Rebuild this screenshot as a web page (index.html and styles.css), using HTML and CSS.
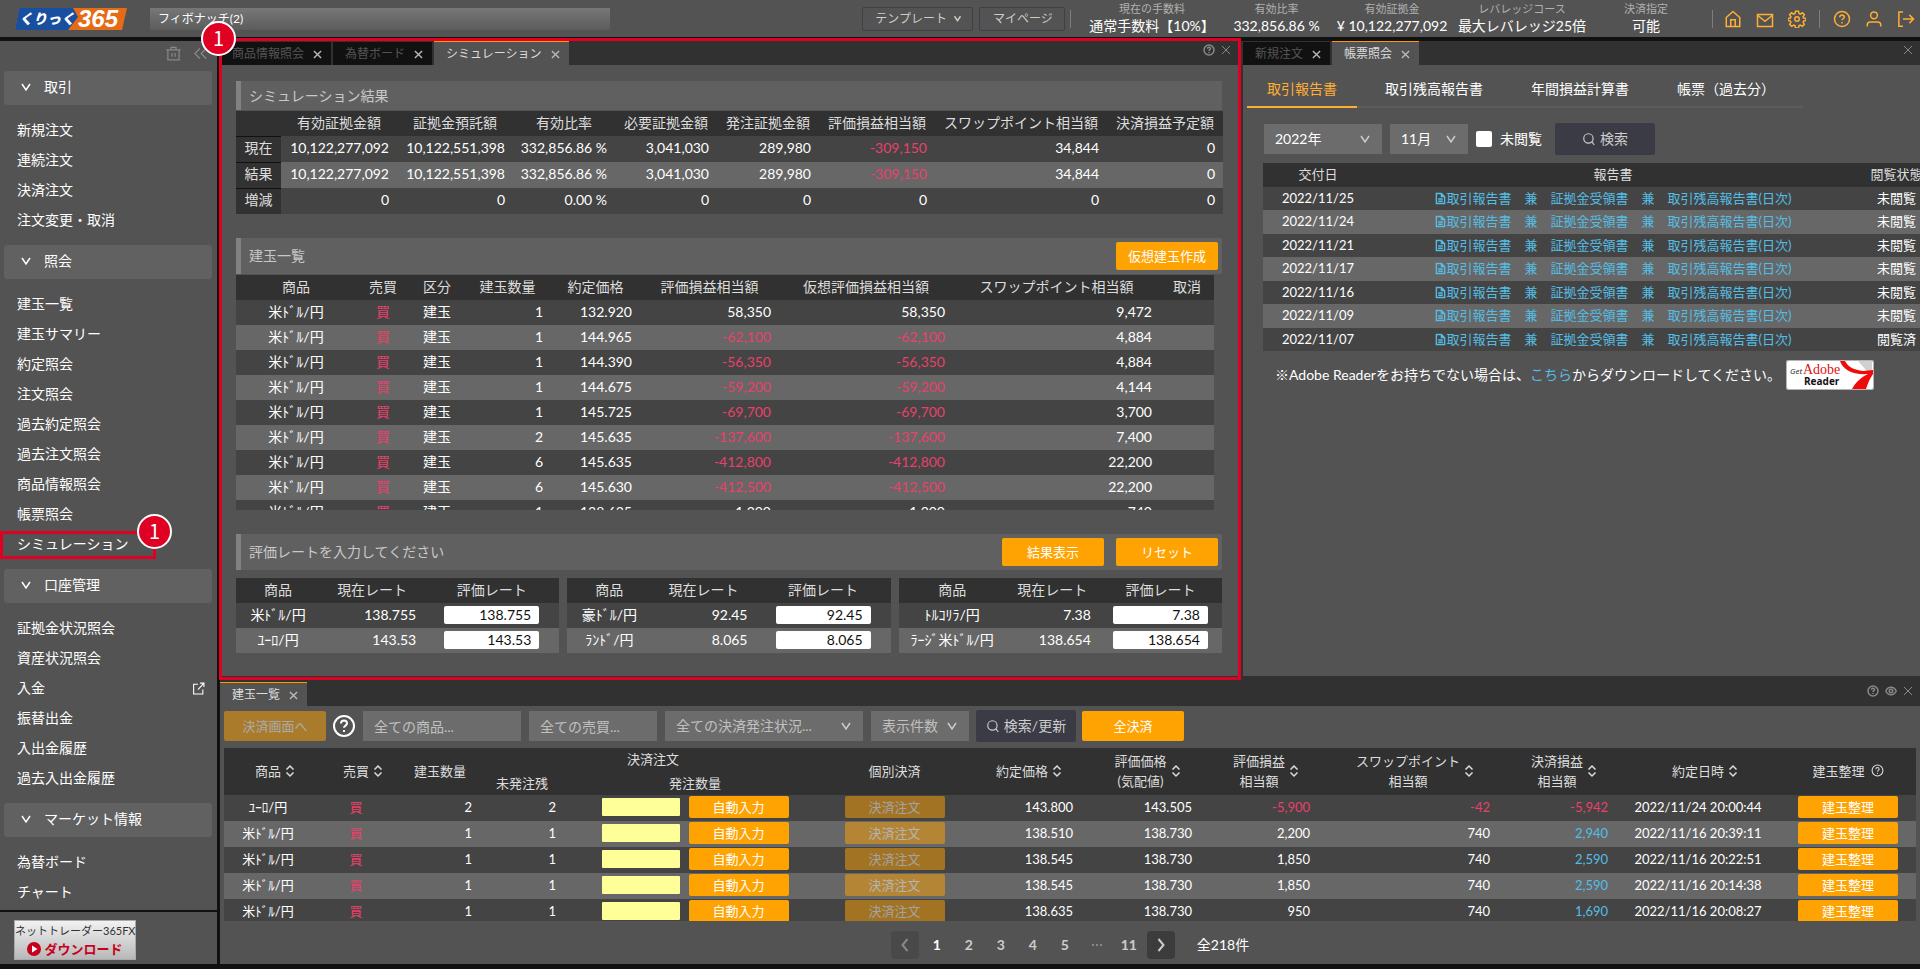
FILE: index.html
```html
<!DOCTYPE html>
<html lang="ja">
<head>
<meta charset="utf-8">
<title>くりっく365 シミュレーション</title>
<link rel="stylesheet" href="styles.css">
</head>
<body>
<svg class="sprite" aria-hidden="true">
  <symbol id="i-x" viewBox="0 0 10 10"><path d="M1 1l8 8M9 1l-8 8"/></symbol>
  <symbol id="i-down" viewBox="0 0 12 12"><path d="M2 3l4 6 4-6"/></symbol>
  <symbol id="i-sort" viewBox="0 0 10 14"><path d="M1.500 5.500L5 2l3.500 3.500M1.500 8.500L5 12l3.500-3.500"/></symbol>
  <symbol id="i-help" viewBox="0 0 24 24"><circle cx="12" cy="12" r="10"/><path d="M9 9.500a3 3 0 0 1 6 0c0 2-3 2.300-3 4.300M12 16v2"/></symbol>
  <symbol id="i-search" viewBox="0 0 24 24"><circle cx="11" cy="11" r="8"/><path d="M16.500 16.500L21 22"/></symbol>
  <symbol id="i-file" viewBox="0 0 12 14"><path d="M1.500 1.500h5.500l3.500 3.500v7.500h-9zM7 1.500V5h3.500M3.500 7.500h5M3.500 10h5"/></symbol>
  <symbol id="i-eye" viewBox="0 0 24 24"><path d="M1.500 12C4 7 8 4.500 12 4.500S20 7 22.500 12C20 17 16 19.500 12 19.500S4 17 1.500 12z"/><circle cx="12" cy="12" r="3.500"/></symbol>
</svg>

<header class="topbar">
  <svg class="logo" width="112" height="22" viewBox="0 0 112 22" role="img" aria-label="くりっく365">
    <path d="M4 0H112L107 22H0z" fill="#e66b17"/>
    <path d="M4 0H58L63 9L53 22H0z" fill="#184f9e"/>
    <text class="logo-kana" x="4" y="16">くりっく</text>
    <text class="logo-num" x="63" y="19">365</text>
  </svg>
  <div class="ticker">フィボナッチ(2)</div>
  <div class="top-actions">
    <button class="ghost" type="button">テンプレート<svg class="ic ic8"><use href="#i-down"/></svg></button>
    <button class="ghost" type="button">マイページ</button>
  </div>
  <span class="divider"></span>
  <dl class="stats">
    <div><dt>現在の手数料</dt><dd>通常手数料【10%】</dd></div>
    <div><dt>有効比率</dt><dd>332,856.86 %</dd></div>
    <div><dt>有効証拠金</dt><dd>¥ 10,122,277,092</dd></div>
    <div><dt>レバレッジコース</dt><dd>最大レバレッジ25倍</dd></div>
    <div><dt>決済指定</dt><dd>可能</dd></div>
  </dl>
  <span class="divider"></span>
  <div class="icons">
    <button type="button" aria-label="ホーム"><svg viewBox="0 0 24 24"><path d="M3 10l9-8 9 8v12H3zM9 22v-9h6v9"/></svg></button>
    <button type="button" aria-label="メール"><svg viewBox="0 0 24 24"><path d="M2 6h20v16H2zM2 7l10 8 10-8"/></svg></button>
    <button type="button" aria-label="設定"><svg viewBox="0 0 24 24"><circle cx="12" cy="12" r="3"/><path d="M10 1.500h4l.7 3.200 1.700.7 2.800-1.700 2.600 2.600-1.700 2.800.7 1.700 3.200.7v2.500l-3.200.7-.7 1.700 1.700 2.800-2.600 2.600-2.800-1.700-1.700.7-.7 3.200h-4l-.7-3.200-1.700-.7-2.800 1.700-2.600-2.600 1.700-2.800-.7-1.700-3.200-.7v-2.500l3.200-.7.7-1.700-1.700-2.800 2.600-2.600 2.800 1.700 1.700-.7z"/></svg></button>
    <span class="divider"></span>
    <button type="button" aria-label="ヘルプ"><svg><use href="#i-help"/></svg></button>
    <button type="button" aria-label="ユーザー"><svg viewBox="0 0 24 24"><circle cx="12" cy="7" r="4.500"/><path d="M3 22v-2a4 4 0 0 1 4-4h10a4 4 0 0 1 4 4v2"/></svg></button>
    <button type="button" aria-label="ログアウト"><svg viewBox="0 0 24 24"><path d="M8 2.500H2.500v19H8M8 12h14M16.500 6.500L22 12l-5.500 5.500"/></svg></button>
  </div>
</header>

<div class="layout">
  <nav class="sidebar">
    <div class="side-tools">
      <button type="button" aria-label="削除"><svg viewBox="0 0 24 24"><path d="M3 6h18v16H3zM0.500 6h23M8 6V2h8v4M9.500 11v6M14.500 11v6"/></svg></button>
      <button type="button" aria-label="折りたたむ"><svg viewBox="0 0 24 24"><path d="M11 4l-8 8 8 8M21 4l-8 8 8 8"/></svg></button>
    </div>
    <section>
      <button class="group" type="button"><svg class="ic ic12"><use href="#i-down"/></svg>取引</button>
      <ul>
        <li><a href="#">新規注文</a></li><li><a href="#">連続注文</a></li><li><a href="#">決済注文</a></li><li><a href="#">注文変更・取消</a></li>
      </ul>
    </section>
    <section>
      <button class="group" type="button"><svg class="ic ic12"><use href="#i-down"/></svg>照会</button>
      <ul>
        <li><a href="#">建玉一覧</a></li><li><a href="#">建玉サマリー</a></li><li><a href="#">約定照会</a></li><li><a href="#">注文照会</a></li><li><a href="#">過去約定照会</a></li><li><a href="#">過去注文照会</a></li><li><a href="#">商品情報照会</a></li><li><a href="#">帳票照会</a></li>
        <li class="marked"><a href="#">シミュレーション</a><span class="badge">1</span></li>
      </ul>
    </section>
    <section>
      <button class="group" type="button"><svg class="ic ic12"><use href="#i-down"/></svg>口座管理</button>
      <ul>
        <li><a href="#">証拠金状況照会</a></li><li><a href="#">資産状況照会</a></li>
        <li><a href="#">入金<svg class="ext" viewBox="0 0 24 24"><path d="M11 4H3v18h17v-8M15 2h7v7M22 2L11 14"/></svg></a></li>
        <li><a href="#">振替出金</a></li><li><a href="#">入出金履歴</a></li><li><a href="#">過去入出金履歴</a></li>
      </ul>
    </section>
    <section>
      <button class="group" type="button"><svg class="ic ic12"><use href="#i-down"/></svg>マーケット情報</button>
      <ul><li><a href="#">為替ボード</a></li><li><a href="#">チャート</a></li></ul>
    </section>
    <div class="side-foot">
      <a class="download" href="#"><span>ネットトレーダー365FX</span>
        <strong><svg width="14" height="14" viewBox="0 0 14 14"><circle cx="7" cy="7" r="7" fill="#c8001e"/><path d="M5 3.500l5.500 3.500L5 10.500z" fill="#fff"/></svg>ダウンロード</strong></a>
    </div>
  </nav>

  <main class="work">
    <div class="upper">
      <section class="panel sim">
        <div class="tabbar">
          <div class="tab">商品情報照会<button type="button" aria-label="閉じる"><svg><use href="#i-x"/></svg></button></div>
          <div class="tab">為替ボード<button type="button" aria-label="閉じる"><svg><use href="#i-x"/></svg></button></div>
          <div class="tab on">シミュレーション<button type="button" aria-label="閉じる"><svg><use href="#i-x"/></svg></button></div>
          <div class="winbtns"><button type="button" aria-label="ヘルプ"><svg class="w12"><use href="#i-help"/></svg></button><button type="button" aria-label="閉じる"><svg class="thin"><use href="#i-x"/></svg></button></div>
        </div>
        <div class="sim-body">
          <h2 class="bar">シミュレーション結果</h2>
          <table class="t14 result">
            <colgroup><col class="w45"><col class="w116"><col class="w116"><col class="w102"><col class="w102"><col class="w102"><col class="w116"><col class="w172"><col class="w116"></colgroup>
            <thead><tr><th></th><th>有効証拠金額</th><th>証拠金預託額</th><th>有効比率</th><th>必要証拠金額</th><th>発注証拠金額</th><th>評価損益相当額</th><th>スワップポイント相当額</th><th>決済損益予定額</th></tr></thead>
            <tbody>
              <tr><th>現在</th><td>10,122,277,092</td><td>10,122,551,398</td><td>332,856.86 %</td><td>3,041,030</td><td>289,980</td><td class="neg">-309,150</td><td>34,844</td><td>0</td></tr>
              <tr><th>結果</th><td>10,122,277,092</td><td>10,122,551,398</td><td>332,856.86 %</td><td>3,041,030</td><td>289,980</td><td class="neg">-309,150</td><td>34,844</td><td>0</td></tr>
              <tr><th>増減</th><td>0</td><td>0</td><td>0.00 %</td><td>0</td><td>0</td><td>0</td><td>0</td><td>0</td></tr>
            </tbody>
          </table>

          <div class="bar tall"><h2>建玉一覧</h2><button class="btn" type="button">仮想建玉作成</button></div>
          <div class="scroll-pos">
            <table class="t14 pos">
              <colgroup><col class="w120"><col class="w54"><col class="w54"><col class="w87"><col class="w89"><col class="w139"><col class="w174"><col class="w207"><col class="w54"></colgroup>
              <thead><tr><th>商品</th><th>売買</th><th>区分</th><th>建玉数量</th><th>約定価格</th><th>評価損益相当額</th><th>仮想評価損益相当額</th><th>スワップポイント相当額</th><th>取消</th></tr></thead>
              <tbody>
                <tr><td>米ﾄﾞﾙ/円</td><td class="neg">買</td><td>建玉</td><td>1</td><td>132.920</td><td>58,350</td><td>58,350</td><td>9,472</td><td></td></tr>
                <tr><td>米ﾄﾞﾙ/円</td><td class="neg">買</td><td>建玉</td><td>1</td><td>144.965</td><td class="neg">-62,100</td><td class="neg">-62,100</td><td>4,884</td><td></td></tr>
                <tr><td>米ﾄﾞﾙ/円</td><td class="neg">買</td><td>建玉</td><td>1</td><td>144.390</td><td class="neg">-56,350</td><td class="neg">-56,350</td><td>4,884</td><td></td></tr>
                <tr><td>米ﾄﾞﾙ/円</td><td class="neg">買</td><td>建玉</td><td>1</td><td>144.675</td><td class="neg">-59,200</td><td class="neg">-59,200</td><td>4,144</td><td></td></tr>
                <tr><td>米ﾄﾞﾙ/円</td><td class="neg">買</td><td>建玉</td><td>1</td><td>145.725</td><td class="neg">-69,700</td><td class="neg">-69,700</td><td>3,700</td><td></td></tr>
                <tr><td>米ﾄﾞﾙ/円</td><td class="neg">買</td><td>建玉</td><td>2</td><td>145.635</td><td class="neg">-137,600</td><td class="neg">-137,600</td><td>7,400</td><td></td></tr>
                <tr><td>米ﾄﾞﾙ/円</td><td class="neg">買</td><td>建玉</td><td>6</td><td>145.635</td><td class="neg">-412,800</td><td class="neg">-412,800</td><td>22,200</td><td></td></tr>
                <tr><td>米ﾄﾞﾙ/円</td><td class="neg">買</td><td>建玉</td><td>6</td><td>145.630</td><td class="neg">-412,500</td><td class="neg">-412,500</td><td>22,200</td><td></td></tr>
                <tr><td>米ﾄﾞﾙ/円</td><td class="neg">買</td><td>建玉</td><td>1</td><td>138.635</td><td>1,200</td><td>1,200</td><td>740</td><td></td></tr>
              </tbody>
            </table>
          </div>

          <div class="bar tall"><h2>評価レートを入力してください</h2><button class="btn" type="button">結果表示</button><button class="btn" type="button">リセット</button></div>
          <div class="rates">
            <table class="t14 rate">
              <colgroup><col class="w84"><col class="w104"><col class="w135"></colgroup>
              <thead><tr><th>商品</th><th>現在レート</th><th>評価レート</th></tr></thead>
              <tbody>
                <tr><td>米ﾄﾞﾙ/円</td><td>138.755</td><td><input aria-label="米ドル/円 評価レート" value="138.755"></td></tr>
                <tr><td>ﾕｰﾛ/円</td><td>143.53</td><td><input aria-label="ユーロ/円 評価レート" value="143.53"></td></tr>
              </tbody>
            </table>
            <table class="t14 rate">
              <colgroup><col class="w84"><col class="w104"><col class="w135"></colgroup>
              <thead><tr><th>商品</th><th>現在レート</th><th>評価レート</th></tr></thead>
              <tbody>
                <tr><td>豪ﾄﾞﾙ/円</td><td>92.45</td><td><input aria-label="豪ドル/円 評価レート" value="92.45"></td></tr>
                <tr><td>ﾗﾝﾄﾞ/円</td><td>8.065</td><td><input aria-label="ランド/円 評価レート" value="8.065"></td></tr>
              </tbody>
            </table>
            <table class="t14 rate">
              <colgroup><col class="w107"><col class="w93"><col class="w123"></colgroup>
              <thead><tr><th>商品</th><th>現在レート</th><th>評価レート</th></tr></thead>
              <tbody>
                <tr><td>ﾄﾙｺﾘﾗ/円</td><td>7.38</td><td><input aria-label="トルコリラ/円 評価レート" value="7.38"></td></tr>
                <tr><td>ﾗｰｼﾞ米ﾄﾞﾙ/円</td><td>138.654</td><td><input aria-label="ラージ米ドル/円 評価レート" value="138.654"></td></tr>
              </tbody>
            </table>
          </div>
        </div>
        <div class="frame"><span class="badge">1</span></div>
      </section>

      <section class="panel reports">
        <div class="tabbar">
          <div class="tab">新規注文<button type="button" aria-label="閉じる"><svg><use href="#i-x"/></svg></button></div>
          <div class="tab on">帳票照会<button type="button" aria-label="閉じる"><svg><use href="#i-x"/></svg></button></div>
          <div class="winbtns"><button type="button" aria-label="閉じる"><svg class="thin"><use href="#i-x"/></svg></button></div>
        </div>
        <nav class="subtabs"><a class="on" href="#">取引報告書</a><a href="#">取引残高報告書</a><a href="#">年間損益計算書</a><a href="#">帳票（過去分）</a></nav>
        <div class="filters">
          <div class="sel s118"><select aria-label="年"><option>2022年</option></select><svg class="ic ic12"><use href="#i-down"/></svg></div>
          <div class="sel s78"><select aria-label="月"><option>11月</option></select><svg class="ic ic12"><use href="#i-down"/></svg></div>
          <label class="check"><input type="checkbox">未閲覧</label>
          <button class="dark" type="button"><svg class="ic ic14"><use href="#i-search"/></svg>検索</button>
        </div>
        <table class="t13 rep">
          <colgroup><col class="w110"><col class="w480"><col class="w87"></colgroup>
          <thead><tr><th>交付日</th><th>報告書</th><th>閲覧状態</th></tr></thead>
          <tbody>
            <tr><td>2022/11/25</td><td><a href="#"><svg class="file"><use href="#i-file"/></svg>取引報告書　兼　証拠金受領書　兼　取引残高報告書(日次)</a></td><td>未閲覧</td></tr>
            <tr><td>2022/11/24</td><td><a href="#"><svg class="file"><use href="#i-file"/></svg>取引報告書　兼　証拠金受領書　兼　取引残高報告書(日次)</a></td><td>未閲覧</td></tr>
            <tr><td>2022/11/21</td><td><a href="#"><svg class="file"><use href="#i-file"/></svg>取引報告書　兼　証拠金受領書　兼　取引残高報告書(日次)</a></td><td>未閲覧</td></tr>
            <tr><td>2022/11/17</td><td><a href="#"><svg class="file"><use href="#i-file"/></svg>取引報告書　兼　証拠金受領書　兼　取引残高報告書(日次)</a></td><td>未閲覧</td></tr>
            <tr><td>2022/11/16</td><td><a href="#"><svg class="file"><use href="#i-file"/></svg>取引報告書　兼　証拠金受領書　兼　取引残高報告書(日次)</a></td><td>未閲覧</td></tr>
            <tr><td>2022/11/09</td><td><a href="#"><svg class="file"><use href="#i-file"/></svg>取引報告書　兼　証拠金受領書　兼　取引残高報告書(日次)</a></td><td>未閲覧</td></tr>
            <tr><td>2022/11/07</td><td><a href="#"><svg class="file"><use href="#i-file"/></svg>取引報告書　兼　証拠金受領書　兼　取引残高報告書(日次)</a></td><td>閲覧済</td></tr>
          </tbody>
        </table>
        <p class="note"><span>※Adobe Readerをお持ちでない場合は、<a href="#">こちら</a>からダウンロードしてください。</span>
          <svg class="adobe" width="88" height="30" viewBox="0 0 88 30" role="img" aria-label="Get Adobe Reader">
            <rect width="88" height="30" rx="2" fill="#b5b5b5"/><rect x="1" y="1" width="86" height="28" rx="2" fill="#fff"/>
            <path d="M72 1h14v16z" fill="#d0d0d0"/><path d="M54 1h5c3 6 9 9 18 10l10-1v4c-3 4-5 9-7 15H66c4-7 8-11 16-15C67 15 57 10 54 1z" fill="#f00a0a"/>
            <text class="ad-get" x="4" y="14">Get</text><text class="ad-adobe" x="17" y="14">Adobe</text><text class="ad-reader" x="18" y="25">Reader</text>
          </svg></p>
      </section>
    </div>

    <section class="panel positions">
      <div class="tabbar low">
        <div class="tab on">建玉一覧<button type="button" aria-label="閉じる"><svg><use href="#i-x"/></svg></button></div>
        <div class="winbtns"><button type="button" aria-label="ヘルプ"><svg class="w12"><use href="#i-help"/></svg></button><button type="button" aria-label="表示"><svg class="w12"><use href="#i-eye"/></svg></button><button type="button" aria-label="閉じる"><svg class="thin"><use href="#i-x"/></svg></button></div>
      </div>
      <div class="pos-body">
        <div class="tools">
          <button class="btn h30" type="button" disabled>決済画面へ</button>
          <button class="helpbtn" type="button" aria-label="ヘルプ"><svg><use href="#i-help"/></svg></button>
          <input class="field s158" aria-label="商品" placeholder="全ての商品...">
          <input class="field s128" aria-label="売買" placeholder="全ての売買...">
          <div class="sel mute s198"><select aria-label="決済発注状況"><option>全ての決済発注状況...</option></select><svg class="ic ic12"><use href="#i-down"/></svg></div>
          <div class="sel mute s98"><select aria-label="表示件数"><option>表示件数</option></select><svg class="ic ic12"><use href="#i-down"/></svg></div>
          <button class="dark" type="button"><svg class="ic ic14"><use href="#i-search"/></svg>検索/更新</button>
          <button class="btn h30" type="button">全決済</button>
        </div>
        <div class="scroll-list">
          <table class="t13 list">
            <colgroup><col class="w88"><col class="w88"><col class="w80"><col class="w84"><col class="w262"><col class="w137"><col class="w118"><col class="w119"><col class="w118"><col class="w180"><col class="w118"><col class="w164"><col class="w136"></colgroup>
            <thead>
              <tr><th rowspan="2"><span class="sort">商品<svg><use href="#i-sort"/></svg></span></th><th rowspan="2"><span class="sort">売買<svg><use href="#i-sort"/></svg></span></th><th rowspan="2">建玉数量</th><th colspan="2">決済注文</th><th rowspan="2">個別決済</th><th rowspan="2"><span class="sort">約定価格<svg><use href="#i-sort"/></svg></span></th><th rowspan="2"><span class="sort">評価価格<br>(気配値)<svg><use href="#i-sort"/></svg></span></th><th rowspan="2"><span class="sort">評価損益<br>相当額<svg><use href="#i-sort"/></svg></span></th><th rowspan="2"><span class="sort">スワップポイント<br>相当額<svg><use href="#i-sort"/></svg></span></th><th rowspan="2"><span class="sort">決済損益<br>相当額<svg><use href="#i-sort"/></svg></span></th><th rowspan="2"><span class="sort">約定日時<svg><use href="#i-sort"/></svg></span></th><th rowspan="2"><span class="withhelp">建玉整理<svg><use href="#i-help"/></svg></span></th></tr>
              <tr><th>未発注残</th><th>発注数量</th></tr>
            </thead>
            <tbody>
              <tr><td>ﾕｰﾛ/円</td><td class="neg">買</td><td>2</td><td>2</td><td><div class="qty"><input aria-label="発注数量"><button class="btn" type="button">自動入力</button></div></td><td><button class="btn" type="button" disabled>決済注文</button></td><td>143.800</td><td>143.505</td><td class="neg">-5,900</td><td class="neg">-42</td><td class="neg">-5,942</td><td>2022/11/24 20:00:44</td><td><button class="btn" type="button">建玉整理</button></td></tr>
              <tr><td>米ﾄﾞﾙ/円</td><td class="neg">買</td><td>1</td><td>1</td><td><div class="qty"><input aria-label="発注数量"><button class="btn" type="button">自動入力</button></div></td><td><button class="btn" type="button" disabled>決済注文</button></td><td>138.510</td><td>138.730</td><td>2,200</td><td>740</td><td class="plus">2,940</td><td>2022/11/16 20:39:11</td><td><button class="btn" type="button">建玉整理</button></td></tr>
              <tr><td>米ﾄﾞﾙ/円</td><td class="neg">買</td><td>1</td><td>1</td><td><div class="qty"><input aria-label="発注数量"><button class="btn" type="button">自動入力</button></div></td><td><button class="btn" type="button" disabled>決済注文</button></td><td>138.545</td><td>138.730</td><td>1,850</td><td>740</td><td class="plus">2,590</td><td>2022/11/16 20:22:51</td><td><button class="btn" type="button">建玉整理</button></td></tr>
              <tr><td>米ﾄﾞﾙ/円</td><td class="neg">買</td><td>1</td><td>1</td><td><div class="qty"><input aria-label="発注数量"><button class="btn" type="button">自動入力</button></div></td><td><button class="btn" type="button" disabled>決済注文</button></td><td>138.545</td><td>138.730</td><td>1,850</td><td>740</td><td class="plus">2,590</td><td>2022/11/16 20:14:38</td><td><button class="btn" type="button">建玉整理</button></td></tr>
              <tr><td>米ﾄﾞﾙ/円</td><td class="neg">買</td><td>1</td><td>1</td><td><div class="qty"><input aria-label="発注数量"><button class="btn" type="button">自動入力</button></div></td><td><button class="btn" type="button" disabled>決済注文</button></td><td>138.635</td><td>138.730</td><td>950</td><td>740</td><td class="plus">1,690</td><td>2022/11/16 20:08:27</td><td><button class="btn" type="button">建玉整理</button></td></tr>
            </tbody>
          </table>
        </div>
        <div class="pager">
          <button class="arrow" type="button" disabled aria-label="前へ"><svg viewBox="0 0 12 16"><path d="M8.500 2L3.500 8l5 6"/></svg></button>
          <button class="cur" type="button">1</button><button type="button">2</button><button type="button">3</button><button type="button">4</button><button type="button">5</button><span class="dots"><i></i><i></i><i></i></span><button type="button">11</button>
          <button class="arrow" type="button" aria-label="次へ"><svg viewBox="0 0 12 16"><path d="M3.500 2l5 6-5 6"/></svg></button>
          <span class="total">全218件</span>
        </div>
      </div>
    </section>
  </main>
</div>
</body>
</html>
```

FILE: styles.css
```css
*, *::before { box-sizing: border-box; }
body {
  margin: 0;
  min-height: 100vh;
  display: flex;
  flex-direction: column;
  gap: 4px;
  padding-bottom: 5px;
  background: #111;
  color: #fff;
  font: 14px/20px Lato, "Noto Sans CJK JP", sans-serif;
  overflow-x: hidden;
}
button, input, select { font: inherit; color: inherit; margin: 0; }
button { background: none; border: 0; padding: 0; }
a { color: inherit; text-decoration: none; }
ul, dl, dd, h2, p { margin: 0; padding: 0; list-style: none; font-weight: 400; font-size: 14px; }
svg { flex: none; fill: none; stroke: currentColor; stroke-width: 2; }
.sprite { position: absolute; width: 0; height: 0; }
.ic8 { width: 9px; height: 9px; }
.ic12 { width: 12px; height: 12px; stroke-width: 1.5; }
.ic14 { width: 14px; height: 14px; }

/* top bar */
.topbar { height: 37px; display: flex; align-items: center; padding: 0 4px 0 15px; background: #535353; }
.logo { stroke: none; overflow: visible; }
.logo text { fill: #fff; font-weight: 900; font-style: italic; }
.logo-kana { font-family: "Noto Sans CJK JP", sans-serif; font-size: 14px; }
.logo-num { font-family: "Liberation Sans", sans-serif; font-size: 24px; }
.ticker { width: 460px; height: 22px; margin-left: 23px; padding-left: 8px; line-height: 22px; font-size: 12px; background: linear-gradient(#777, #5c5c5c); }
.top-actions { display: flex; gap: 6px; margin-left: auto; }
.ghost { height: 24px; min-width: 86px; padding: 0 10px 0 12px; display: flex; align-items: center; justify-content: center; gap: 6px; border: 1px solid #3f3f49; border-radius: 2px; font-size: 12px; color: #ccc; }
.divider { width: 1px; height: 18px; background: #7d7d7d; }
.top-actions + .divider { margin-left: 5px; }
.stats { display: grid; grid-template-columns: 138px 111px 120px 140px 108px; margin: 0 12px; text-align: center; white-space: nowrap; }
.stats dt { font-size: 11px; line-height: 15px; color: #b0b0b0; }
.stats dd { line-height: 20px; }
.icons { display: flex; align-items: center; gap: 12px; margin-left: 10px; color: #ffad33; }
.icons button { width: 20px; height: 20px; display: grid; place-items: center; }
.icons svg { width: 18px; height: 18px; }

/* sidebar */
.layout { flex: 1; display: flex; gap: 3px; }
.sidebar { flex: 0 0 217px; display: flex; flex-direction: column; background: #535353; }
.side-tools { height: 30px; display: flex; justify-content: flex-end; align-items: center; gap: 12px; padding: 0 9px 6px 0; color: #888; }
.side-tools button, .side-tools svg { width: 15px; height: 15px; display: block; }
.group { display: flex; align-items: center; gap: 12px; width: 208px; height: 34px; margin-left: 4px; padding: 0 0 2px 16px; border-radius: 3px; background: #616161; }
.sidebar ul { padding: 11px 0 9px; }
.sidebar section:nth-last-child(2) ul { padding-bottom: 0; }
.sidebar li { position: relative; }
.sidebar li a { display: flex; justify-content: space-between; align-items: center; height: 30px; padding: 0 12px 2px 17px; }
.ext { width: 13px; height: 13px; }
.marked::before { content: ""; position: absolute; left: 0; top: 1px; width: 156px; height: 28px; border: 3px solid #df0024; }
.badge { position: absolute; width: 35px; height: 35px; border: 2px solid #fff; border-radius: 50%; background: #df0024; text-align: center; font: 20px/30px "Noto Sans CJK JP", sans-serif; }
.marked .badge { left: 137px; top: -16px; }
.side-foot { margin-top: auto; padding: 8px 14px 4px; border-top: 2px solid #111; }
.download { display: block; width: 122px; height: 40px; border: 1px solid #aaa; background: linear-gradient(#f2f2f2, #b8b8b8); text-align: center; white-space: nowrap; color: #333; font-size: 11px; line-height: 19px; }
.download span { display: block; }
.download strong { display: flex; justify-content: center; align-items: center; gap: 3px; font-size: 13px; line-height: 18px; color: #c8001e; }
.download svg { stroke: none; }

/* work area */
.work { flex: 1; min-width: 0; display: flex; flex-direction: column; }
.upper { display: grid; grid-template-columns: minmax(0, 1018fr) minmax(0, 677fr); gap: 5px; background: #313131; }
.panel { min-width: 0; background: #535353; }
.tabbar { display: flex; gap: 2px; height: 24px; background: #313131; font-size: 12px; }
.tabbar.low { height: 30px; padding-top: 6px; }
.tab { display: flex; align-items: center; gap: 9px; padding: 1px 9px 0 12px; border-top: 1px solid #313131; background: #111; color: #555; white-space: nowrap; }
.tab.on { background: #535353; border-top-color: #f90; color: #ddd; }
.tab button { width: 9px; height: 9px; display: block; color: #bbb; }
.tab svg { width: 9px; height: 9px; display: block; stroke-width: 1.5; }
.winbtns { display: flex; align-items: flex-start; gap: 6px; margin-left: auto; padding: 3px 7px 0 0; color: #888; }
.winbtns button { height: 12px; display: flex; align-items: center; }
.winbtns .w12 { width: 12px; height: 12px; stroke-width: 3; }
.thin { width: 10px; height: 10px; stroke-width: 1; }

table { width: 100%; table-layout: fixed; border-collapse: collapse; white-space: nowrap; }
th, td { padding: 0 0 2px; font-weight: 400; text-align: center; }
thead { background: #313131; color: #ddd; }
tbody tr { background: #444; }
tbody tr:nth-child(even) { background: #676767; }
.t14 { font-size: 14px; line-height: 20px; }
.t14 tr { height: 25px; }
.t13 { font-size: 13px; line-height: 20px; }
.neg { color: #e8416a; }
.plus, .rep a, .note a { color: #55bde4; }

.bar { height: 29px; display: flex; align-items: center; gap: 12px; margin-bottom: 1px; padding: 0 4px 0 8px; border-left: 5px solid #828282; background: #606060; color: #c8c8c8; }
.bar.tall { height: 36px; margin-top: 24px; }
.bar.tall h2 { margin-right: auto; }
.btn { width: 102px; height: 28px; border-radius: 2px; background: #ffa303; color: #fff; font-size: 13px; line-height: 20px; }
.btn:disabled { opacity: .5; }

/* simulation panel */
.sim { position: relative; }
.sim-body { padding: 16px 16px 23px; }
.result tbody tr { height: 26px; }
.result tbody th { background: #323232; box-shadow: inset 0 1px #111; color: #ddd; }
.result td { text-align: right; padding-right: 8px; }
.scroll-pos { height: 235px; margin-right: 8px; overflow: hidden; }
.pos td:nth-child(n+4) { text-align: right; padding-right: 8px; }
.rates { display: grid; grid-template-columns: repeat(3, minmax(0, 1fr)); gap: 8px; padding-top: 7px; }
.rate td:nth-child(2) { text-align: right; padding-right: 8px; }
.rate td:nth-child(3) { line-height: 0; }
.rate input { width: 95px; height: 18px; padding: 0 8px; border: 0; border-radius: 2px; background: #fff; color: #111; text-align: right; font-size: 14px; line-height: 18px; }
.frame { position: absolute; inset: -3px -3px -4px -1px; border: 3px solid #df0024; pointer-events: none; }
.frame .badge { left: -21px; top: -20px; z-index: 1; }

/* reports panel */
.reports { overflow: hidden; }
.subtabs { display: flex; gap: 8px; margin-left: 4px; width: 556px; border-bottom: 2px solid #5c5c5c; }
.subtabs a { padding: 14px 20px 7px; margin-bottom: -2px; border-bottom: 2px solid transparent; }
.subtabs .on { color: #ffad33; border-color: #ffad33; }
.filters { display: flex; align-items: center; gap: 8px; padding: 15px 0 8px 21px; }
.sel { position: relative; height: 30px; }
.sel select { width: 100%; height: 30px; padding: 0 11px; appearance: none; border: 0; border-radius: 0; background: #6c6c6c; color: #fff; }
.sel svg { position: absolute; right: 11px; top: 9px; color: #ccc; pointer-events: none; }
.sel.mute select { color: #c0c0c0; }
.check { display: flex; align-items: center; gap: 8px; margin-right: 5px; }
.check input { appearance: none; width: 16px; height: 16px; border-radius: 2px; background: #fff; }
.dark { display: flex; align-items: center; justify-content: center; gap: 4px; width: 100px; height: 32px; border-radius: 2px; background: #3b3b46; color: #ccc; }
.rep { margin-left: 20px; }
.rep tr { height: 24px; }
.rep tbody tr:nth-child(odd) { height: 23px; }
.file { width: 11px; height: 13px; margin-right: 1px; vertical-align: -2px; stroke-width: 1.5; }
.note { display: flex; align-items: center; gap: 5px; padding: 9px 0 0 32px; white-space: nowrap; }
.adobe { stroke: none; }
.ad-get { font: italic 8px "Open Sans", sans-serif; fill: #222; }
.ad-adobe { font: 14px "Liberation Serif", serif; fill: #e01010; }
.ad-reader { font: bold 10px "Open Sans", sans-serif; fill: #111; }

/* positions panel */
.positions { flex: 1; }
.pos-body { padding: 4px 4px; }
.tools { display: flex; align-items: center; gap: 8px; padding-bottom: 6px; }
.h30 { height: 30px; }
.tools .dark { margin: 0 -2px 0 -1px; }
.helpbtn { width: 24px; height: 24px; margin: 0 -1px 0 -2px; }
.helpbtn svg { display: block; width: 24px; height: 24px; }
.field { height: 30px; padding: 0 11px; border: 0; background: #6c6c6c; color: #fff; }
.field::placeholder { color: #c0c0c0; opacity: 1; }
.scroll-list { height: 173px; overflow: hidden; }
.list thead tr:first-child { height: 24px; }
.list thead tr:last-child { height: 23px; }
.list tbody tr { height: 26px; }
.list td:nth-child(3), .list td:nth-child(4), .list td:nth-child(n+7):nth-child(-n+11) { text-align: right; padding-right: 8px; }
.list .btn { display: block; width: 100px; height: 22px; margin: 0 auto; }
.qty { display: flex; justify-content: center; align-items: center; gap: 9px; }
.list .qty .btn { margin: 0; }
.qty input { width: 78px; height: 18px; border: 0; border-radius: 1px; background: #ff9; color: #111; }
.sort { position: relative; display: inline-block; vertical-align: top; }
.sort svg { position: absolute; left: calc(100% + 4px); top: calc(50% - 7px); width: 10px; height: 14px; stroke-width: 1.5; }
.withhelp { display: flex; justify-content: center; align-items: center; gap: 6px; }
.withhelp svg { width: 13px; height: 13px; }
.pager { display: flex; justify-content: center; align-items: center; gap: 4px; padding-top: 10px; font-size: 14px; font-weight: 700; color: #ccc; }
.pager button { width: 28px; height: 28px; }
.pager .cur { color: #fff; }
.pager .arrow { display: grid; place-items: center; border-radius: 4px; background: #3c3c3c; }
.pager .arrow:disabled { background: #494949; color: #888; }
.pager .arrow svg { width: 12px; height: 16px; }
.dots { width: 28px; display: flex; justify-content: center; gap: 2px; }
.dots i { width: 2px; height: 2px; background: #888; }
.total { margin-left: 18px; color: #fff; font-weight: 400; }

/* shared widths */
.s118 { width: 118px; } .s78 { width: 78px; } .s158 { width: 158px; } .s128 { width: 128px; } .s198 { width: 198px; } .s98 { width: 98px; }
.w45 { width: 45px; } .w54 { width: 54px; } .w80 { width: 80px; } .w84 { width: 84px; } .w87 { width: 87px; } .w88 { width: 88px; } .w89 { width: 89px; }
.w93 { width: 93px; } .w102 { width: 102px; } .w104 { width: 104px; } .w107 { width: 107px; } .w110 { width: 110px; } .w116 { width: 116px; }
.w118 { width: 118px; } .w119 { width: 119px; } .w120 { width: 120px; } .w123 { width: 123px; } .w135 { width: 135px; }
.w136 { width: 136px; } .w137 { width: 137px; } .w139 { width: 139px; } .w164 { width: 164px; } .w172 { width: 172px; } .w174 { width: 174px; }
.w180 { width: 180px; } .w207 { width: 207px; } .w262 { width: 262px; } .w480 { width: 480px; }
```
